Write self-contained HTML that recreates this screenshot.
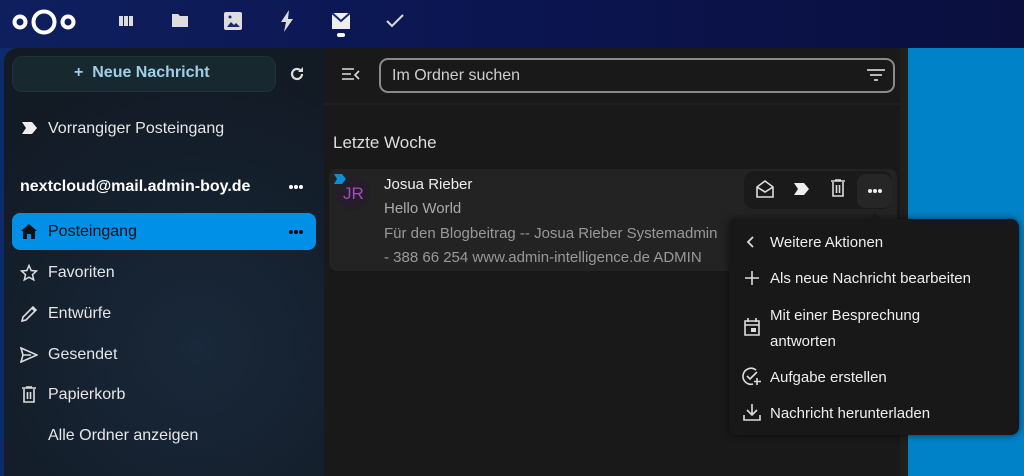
<!DOCTYPE html>
<html><head><meta charset="utf-8"><style>
*{box-sizing:border-box;margin:0;padding:0}
body{width:1024px;height:476px;overflow:hidden;font-family:"Liberation Sans",sans-serif;background:linear-gradient(90deg,#0d2a6a,#0a1550 60%,#0a1246);position:relative;color:#ddd}
.top{position:absolute;left:0;top:0;width:1024px;height:48px;background:linear-gradient(90deg,#0f1f5e,#0b1550 50%,#0a0f3e)}
.ic{position:absolute}
.side{position:absolute;left:4px;top:48px;width:322px;height:428px;border-radius:14px 0 0 0;background:radial-gradient(circle at 60% 70%,#19283a,#121a24 80%);}
.list{position:absolute;left:324px;top:48px;width:578px;height:428px;background:#191919}
.strip{position:absolute;left:900px;top:48px;width:8px;height:428px;background:#1f1f1f}
.blue{position:absolute;left:908px;top:48px;width:116px;height:428px;background:#0082c9}
.t{position:absolute;font-size:15px;white-space:nowrap}
.nav .t{color:#e6e6e6}
svg{display:block}
</style></head><body>
<div class="top"></div>
<svg class="ic" style="left:11px;top:8px" width="66" height="28" viewBox="0 0 66 28"><g fill="none" stroke="#fff" stroke-width="4"><circle cx="9" cy="14" r="5.5"/><circle cx="33" cy="14" r="10.5"/><circle cx="57" cy="14" r="5.5"/></g></svg>
<svg class="ic" style="left:118px;top:14px" width="16" height="14"><rect x="1" y="2" width="4" height="10" fill="#ddd"/><rect x="6" y="2" width="4" height="10" fill="#ddd"/><rect x="11" y="2" width="4" height="10" fill="#ddd"/></svg>
<svg class="ic" style="left:171px;top:12px" width="18" height="16"><path d="M1 2h6l2 2h8v11H1z" fill="#ddd"/></svg>
<svg class="ic" style="left:223px;top:11px" width="20" height="20"><rect x="1" y="1" width="18" height="18" rx="2" fill="#ddd"/><path d="M4 16l4-5 3 3 2-2 4 4z" fill="#1a2a66"/><circle cx="7" cy="6" r="1.5" fill="#1a2a66"/></svg>
<svg class="ic" style="left:280px;top:10px" width="14" height="22"><path d="M9 0L1 12h5l-2 10 9-13H8z" fill="#ddd"/></svg>
<svg class="ic" style="left:331px;top:13px" width="20" height="24"><rect x="1" y="0" width="18" height="16" fill="#eee"/><path d="M1 0l9 8 9-8" fill="none" stroke="#1a2a66" stroke-width="2"/><rect x="6" y="20" width="8" height="4" rx="2" fill="#fff"/></svg>
<svg class="ic" style="left:385px;top:13px" width="20" height="16"><path d="M2 8l5 5L18 2" fill="none" stroke="#ddd" stroke-width="2"/></svg>

<div class="side nav">
  <div style="position:absolute;left:8px;top:8px;width:264px;height:36px;border-radius:10px;background:#17282f;border:1px solid #1d3139"></div>
  <div class="t" style="left:70px;top:16px;color:#9fd0ea;font-weight:bold;font-size:16px">+&nbsp;&nbsp;Neue Nachricht</div>
  <svg class="ic" style="left:284px;top:17px" width="18" height="18" viewBox="0 0 18 18"><path d="M14 9a5 5 0 1 1-1.5-3.6" fill="none" stroke="#ddd" stroke-width="2.2"/><path d="M15 2v5h-5z" fill="#ddd"/></svg>
  <svg class="ic" style="left:18px;top:74px" width="16" height="12"><path d="M0 0h10l5 6-5 6H0l4-6z" fill="#eee"/></svg>
  <div class="t" style="left:44px;top:72px;font-size:16px">Vorrangiger Posteingang</div>
  <div class="t" style="left:16px;top:130px;font-weight:bold;color:#fff;font-size:16px">nextcloud@mail.admin-boy.de</div>
  <svg class="ic" style="left:284px;top:136px" width="16" height="6"><circle cx="3" cy="3" r="2" fill="#fff"/><circle cx="8" cy="3" r="2" fill="#fff"/><circle cx="13" cy="3" r="2" fill="#fff"/></svg>
  <div style="position:absolute;left:8px;top:165px;width:304px;height:37px;border-radius:8px;background:#0090e8"></div>
  <svg class="ic" style="left:17px;top:176px" width="16" height="15"><path d="M8 0L0 7h2v8h4v-5h4v5h4V7h2z" fill="#111"/></svg>
  <div class="t" style="left:44px;top:175px;color:#111;font-size:16px">Posteingang</div>
  <svg class="ic" style="left:284px;top:181px" width="16" height="6"><circle cx="3" cy="3" r="2" fill="#111"/><circle cx="8" cy="3" r="2" fill="#111"/><circle cx="13" cy="3" r="2" fill="#111"/></svg>
  <svg class="ic" style="left:16px;top:216px" width="18" height="18" viewBox="0 0 18 18"><path d="M9 1.5l2.2 5 5.3.5-4 3.6 1.2 5.3L9 13.2 4.3 15.9l1.2-5.3-4-3.6 5.3-.5z" fill="none" stroke="#ddd" stroke-width="1.5"/></svg>
  <div class="t" style="left:44px;top:216px;font-size:16px">Favoriten</div>
  <svg class="ic" style="left:17px;top:257px" width="17" height="17"><path d="M1 16l1-4L12 2l3 3L5 15z M11 3l3 3" fill="none" stroke="#ddd" stroke-width="1.6"/></svg>
  <div class="t" style="left:44px;top:257px;font-size:16px">Entwürfe</div>
  <svg class="ic" style="left:16px;top:299px" width="18" height="16"><path d="M1 1l16 7-16 7 2-7zM3 8h8" fill="none" stroke="#ddd" stroke-width="1.6"/></svg>
  <div class="t" style="left:44px;top:298px;font-size:16px">Gesendet</div>
  <svg class="ic" style="left:18px;top:338px" width="14" height="17"><path d="M0 2h14M4 1h6M2 3v13h10V3M5.5 6v7M8.5 6v7" fill="none" stroke="#ddd" stroke-width="1.6"/></svg>
  <div class="t" style="left:44px;top:338px;font-size:16px">Papierkorb</div>
  <div class="t" style="left:44px;top:379px;font-size:16px">Alle Ordner anzeigen</div>
</div>

<div class="list">
  <svg class="ic" style="left:18px;top:20px" width="18" height="14"><path d="M0 1h12M0 6h9M0 11h12M17 3l-4 4 4 4" fill="none" stroke="#ddd" stroke-width="1.6"/></svg>
  <div style="position:absolute;left:55px;top:10px;width:516px;height:35px;border:2px solid #8a8a8a;border-radius:9px"></div>
  <div class="t" style="left:68px;top:19px;color:#cfcfcf;font-size:16px">Im Ordner suchen</div>
  <svg class="ic" style="left:543px;top:21px" width="18" height="14"><path d="M0 1h18M3 6h12M7 11h4" stroke="#ccc" stroke-width="1.8"/></svg>
  <div style="position:absolute;left:0;top:55px;width:578px;height:2px;background:#1f1f1f"></div>
  <div class="t" style="left:9px;top:85px;font-size:17px;color:#ddd">Letzte Woche</div>
  <div style="position:absolute;left:5px;top:121px;width:568px;height:102px;border-radius:8px;background:#232323"></div>
  <div style="position:absolute;left:12px;top:128px;width:34px;height:34px;border-radius:50%;background:#261d2a"></div>
  <svg class="ic" style="left:10px;top:126px" width="14" height="10"><path d="M0 0h8l4 5-4 5H0l3-5z" fill="#0a8fd6"/></svg>
  <div class="t" style="left:19px;top:136px;color:#a04fb8;font-size:17px">JR</div>
  <div class="t" style="left:60px;top:128px;color:#eee">Josua Rieber</div>
  <div class="t" style="left:60px;top:152px;color:#aaa">Hello World</div>
  <div class="t" style="left:60px;top:177px;color:#999">Für den Blogbeitrag -- Josua Rieber Systemadmin</div>
  <div class="t" style="left:60px;top:201px;color:#999">- 388 66 254 www.admin-intelligence.de ADMIN</div>
  <div style="position:absolute;left:420px;top:123px;width:148px;height:38px;border-radius:10px;background:#1a1a1a"></div>
  <div style="position:absolute;left:533px;top:126px;width:35px;height:34px;border-radius:9px;background:#262626"></div>
  <svg class="ic" style="left:431px;top:132px" width="20" height="18"><path d="M2 7l8-6 8 6v10H2zM2 7l8 5 8-5" fill="none" stroke="#ddd" stroke-width="1.6"/></svg>
  <svg class="ic" style="left:470px;top:135px" width="16" height="12"><path d="M0 0h10l5 6-5 6H0l4-6z" fill="#eee"/></svg>
  <svg class="ic" style="left:507px;top:131px" width="14" height="18"><path d="M0 2h14M4 1h6M2 3v14h10V3M5.5 6v8M8.5 6v8" fill="none" stroke="#ddd" stroke-width="1.6"/></svg>
  <svg class="ic" style="left:543px;top:140px" width="16" height="6"><circle cx="3" cy="3" r="2" fill="#eee"/><circle cx="8" cy="3" r="2" fill="#eee"/><circle cx="13" cy="3" r="2" fill="#eee"/></svg>
</div>
<div class="strip"></div>
<div class="blue"></div>

<div style="position:absolute;left:729px;top:219px;width:290px;height:216px;border-radius:8px;background:#181818;box-shadow:0 0 8px rgba(0,0,0,.6)"></div>
<svg class="ic" style="left:868px;top:212px" width="14" height="8"><path d="M0 8l7-7 7 7z" fill="#181818"/></svg>
<div>
<svg class="ic" style="left:746px;top:235px" width="10" height="14"><path d="M7 2L2 7l5 5" fill="none" stroke="#ddd" stroke-width="1.8"/></svg>
<div class="t" style="left:770px;top:234px;color:#eee">Weitere Aktionen</div>
<svg class="ic" style="left:744px;top:270px" width="16" height="16"><path d="M8 1v14M1 8h14" stroke="#ddd" stroke-width="1.6"/></svg>
<div class="t" style="left:770px;top:270px;color:#eee">Als neue Nachricht bearbeiten</div>
<svg class="ic" style="left:743px;top:317px" width="18" height="20"><path d="M2 4h14v14H2zM2 8h14M5 1v4M13 1v4" fill="none" stroke="#ddd" stroke-width="1.6"/><rect x="8" y="11" width="5" height="4" fill="#ddd"/></svg>
<div class="t" style="left:770px;top:307px;color:#eee">Mit einer Besprechung</div>
<div class="t" style="left:770px;top:333px;color:#eee">antworten</div>
<svg class="ic" style="left:742px;top:367px" width="20" height="20"><path d="M14 3A8 8 0 1 0 11 17" fill="none" stroke="#ddd" stroke-width="1.6"/><path d="M5 9l3 3 7-7M15 11v7M12 14.5h7" fill="none" stroke="#ddd" stroke-width="1.6"/></svg>
<div class="t" style="left:770px;top:369px;color:#eee">Aufgabe erstellen</div>
<svg class="ic" style="left:743px;top:403px" width="18" height="18"><path d="M9 1v11M4 7l5 5 5-5M1 12v5h16v-5" fill="none" stroke="#ddd" stroke-width="1.6"/></svg>
<div class="t" style="left:770px;top:405px;color:#eee">Nachricht herunterladen</div>
</div>
</body></html>
